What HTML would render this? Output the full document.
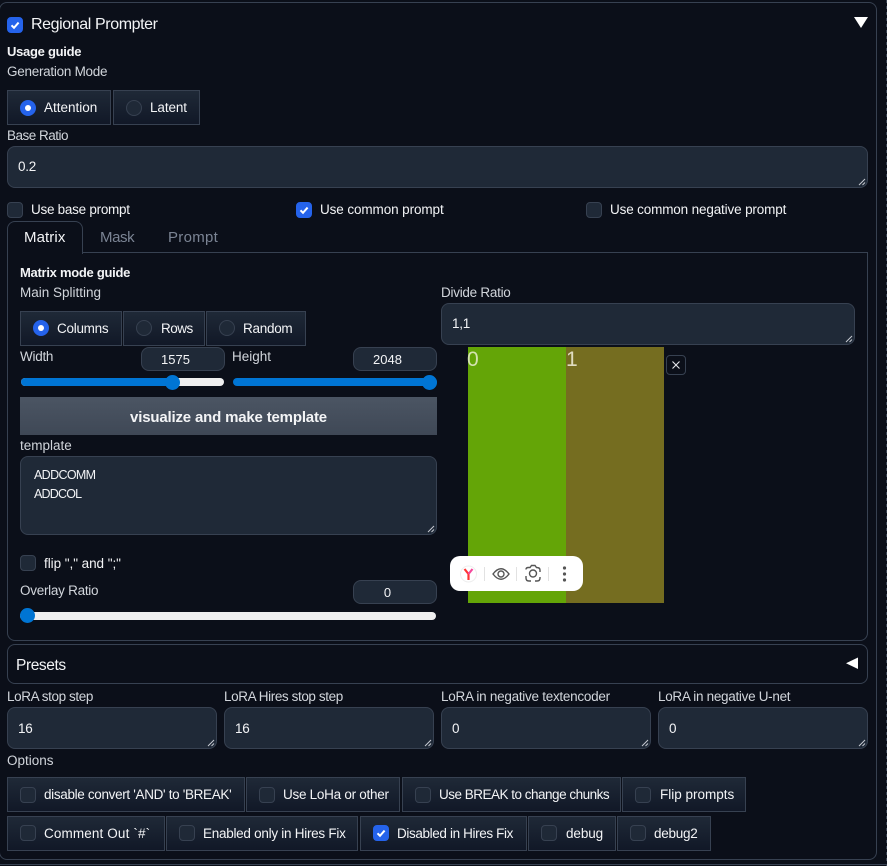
<!DOCTYPE html>
<html><head><meta charset="utf-8"><style>
html,body{margin:0;padding:0;background:#0b0f19}
body{width:887px;height:866px;position:relative;overflow:hidden;font-family:"Liberation Sans",sans-serif;font-size:13.5px;color:#f3f4f6}
.a,.t,.b,.i,.cb,.r,.g,.n{position:absolute;box-sizing:border-box}
.t{white-space:nowrap;line-height:22px;height:22px;letter-spacing:-.27px}
.l{color:#d1d5db}
.s{font-weight:700;color:#f3f4f6;font-size:13px;letter-spacing:-.28px}
.b{border:1px solid #374151}
.i{background:#1f2937;border:1px solid #374151;border-radius:8px}
.i svg{position:absolute;right:1px;bottom:1px}
.g{border:1px solid #374151;background:linear-gradient(to bottom,#1f2937,#111827)}
.cb{width:16px;height:16px;border-radius:4px;background:#1f2937;border:1px solid #374151}
.cb.on{background:#2563eb;border-color:#2563eb}
.cb svg{position:absolute;left:-1px;top:-1px}
.r{width:16px;height:16px;border-radius:50%;background:#1f2937;border:1px solid #374151}
.r.on{background:#2563eb;border-color:#2563eb}
.r.on:after{content:"";position:absolute;left:4px;top:4px;width:6px;height:6px;border-radius:50%;background:#fff}
.n{background:#1f2937;border:1px solid #374151;border-radius:8px;height:24px;width:84px;text-align:center;line-height:24px;font-size:13px;padding-right:15px}
.tr{position:absolute;background:#efefef;border-radius:4px;height:8px}
.fi{position:absolute;background:#0075d4;border-radius:4px;height:8px}
.th{position:absolute;background:#0075d4;border-radius:50%;width:15px;height:15px}
</style></head><body>

<svg width="0" height="0" style="position:absolute"><defs>
<symbol id="ck" viewBox="0 0 16 16"><path d="M4.5 8.3 L7 10.8 L11.6 5.6" fill="none" stroke="#fff" stroke-width="2"/></symbol>
<symbol id="rz" viewBox="0 0 8 8"><path d="M1 7 L7 1 M4.5 7 L7 4.5" stroke="#c5c9d0" stroke-width="1" fill="none"/></symbol>
</defs></svg>

<!-- outer panel -->
<div class="b" style="left:-1px;top:2px;width:878px;height:858px;border-radius:8px"></div>
<div class="a" style="left:0;top:864px;width:887px;height:1px;background:#374151"></div>
<div class="a" style="left:886px;top:0;width:1px;height:866px;background:repeating-linear-gradient(to bottom,#374151 0 3px,transparent 3px 6px)"></div>

<div class="cb on" style="left:7px;top:17px"><svg width="16" height="16"><use href="#ck"/></svg></div>
<div class="t" style="left:31px;top:14px;font-size:16px;letter-spacing:-.4px">Regional Prompter</div>
<svg class="a" style="left:854px;top:16px" width="14" height="13"><path d="M0 1 H14 L7 12 Z" fill="#fff"/></svg>

<div class="t s" style="left:7px;top:41px">Usage guide</div>
<div class="t l" style="left:7px;top:61px">Generation Mode</div>

<div class="g" style="left:7px;top:90px;width:104px;height:35px"></div>
<div class="g" style="left:113px;top:90px;width:87px;height:35px"></div>
<div class="r on" style="left:20px;top:100px"></div>
<div class="t" style="left:44px;top:97px;letter-spacing:0">Attention</div>
<div class="r" style="left:126px;top:100px"></div>
<div class="t" style="left:150px;top:97px;letter-spacing:-.1px">Latent</div>

<div class="t l" style="left:7px;top:125px;letter-spacing:-.5px">Base Ratio</div>
<div class="i" style="left:7px;top:146px;width:861px;height:42px"><svg width="8" height="8"><use href="#rz"/></svg></div>
<div class="t" style="left:18px;top:156px">0.2</div>

<div class="cb" style="left:7px;top:202px"></div>
<div class="t" style="left:31px;top:199px">Use base prompt</div>
<div class="cb on" style="left:296px;top:202px"><svg width="16" height="16"><use href="#ck"/></svg></div>
<div class="t" style="left:320px;top:199px;letter-spacing:-.1px">Use common prompt</div>
<div class="cb" style="left:586px;top:202px"></div>
<div class="t" style="left:610px;top:199px;letter-spacing:-.15px">Use common negative prompt</div>

<!-- tabs -->
<div class="b" style="left:7px;top:252px;width:861px;height:389px;border-radius:0 0 8px 8px"></div>
<div class="a" style="left:7px;top:221px;width:76px;height:33px;background:#0b0f19;border:1px solid #374151;border-bottom:none;border-radius:8px 8px 0 0"></div>
<div class="t" style="left:24px;top:227px;font-size:15px;letter-spacing:.1px">Matrix</div>
<div class="t" style="left:100px;top:227px;font-size:15px;letter-spacing:-.4px;color:#7b8494">Mask</div>
<div class="t" style="left:168px;top:227px;font-size:15px;letter-spacing:.3px;color:#7b8494">Prompt</div>

<div class="t s" style="left:20px;top:262px">Matrix mode guide</div>
<div class="t l" style="left:20px;top:282px;letter-spacing:0">Main Splitting</div>

<div class="g" style="left:20px;top:311px;width:102px;height:35px"></div>
<div class="g" style="left:123px;top:311px;width:82px;height:35px"></div>
<div class="g" style="left:206px;top:311px;width:100px;height:35px"></div>
<div class="r on" style="left:33px;top:320px"></div>
<div class="t" style="left:57px;top:318px">Columns</div>
<div class="r" style="left:136px;top:320px"></div>
<div class="t" style="left:161px;top:318px;letter-spacing:-.5px">Rows</div>
<div class="r" style="left:219px;top:320px"></div>
<div class="t" style="left:243px;top:318px">Random</div>

<div class="t l" style="left:20px;top:346px">Width</div>
<div class="n" style="left:141px;top:347px">1575</div>
<div class="t l" style="left:232px;top:346px;letter-spacing:0">Height</div>
<div class="n" style="left:353px;top:347px">2048</div>

<div class="tr" style="left:21px;top:378px;width:203px"></div>
<div class="fi" style="left:21px;top:378px;width:150px"></div>
<div class="th" style="left:165px;top:375px"></div>
<div class="fi" style="left:233px;top:378px;width:204px"></div>
<div class="th" style="left:422px;top:375px"></div>

<div class="a" style="left:20px;top:397px;width:417px;height:38px;background:linear-gradient(to bottom,#4b5563,#3f4856);text-align:center;line-height:41px;font-weight:700;font-size:15px;letter-spacing:-.18px;color:#f3f4f6">visualize and make template</div>

<div class="t l" style="left:20px;top:435px;letter-spacing:0">template</div>
<div class="i" style="left:20px;top:456px;width:417px;height:79px"><svg width="8" height="8"><use href="#rz"/></svg></div>
<div class="t" style="left:34px;top:464px;font-size:12.5px;letter-spacing:-.65px">ADDCOMM</div>
<div class="t" style="left:34px;top:483px;font-size:12.5px;letter-spacing:-.8px">ADDCOL</div>

<div class="cb" style="left:20px;top:555px"></div>
<div class="t" style="left:44px;top:553px;letter-spacing:-.05px">flip "," and ";"</div>
<div class="t l" style="left:20px;top:580px">Overlay Ratio</div>
<div class="n" style="left:353px;top:580px">0</div>
<div class="tr" style="left:20px;top:612px;width:416px"></div>
<div class="th" style="left:20px;top:608px"></div>

<!-- Divide ratio + image -->
<div class="t l" style="left:441px;top:282px">Divide Ratio</div>
<div class="i" style="left:441px;top:303px;width:414px;height:42px"><svg width="8" height="8"><use href="#rz"/></svg></div>
<div class="t" style="left:452px;top:313px">1,1</div>

<div class="a" style="left:468px;top:347px;width:98px;height:256px;background:#64a507"></div>
<div class="a" style="left:566px;top:347px;width:98px;height:256px;background:#756d20"></div>
<div class="t" style="left:467px;top:349px;font-size:21px;letter-spacing:0;color:#d4e3b0">0</div>
<div class="t" style="left:566px;top:349px;font-size:21px;letter-spacing:0;color:#e0dcc0">1</div>
<div class="a" style="left:666px;top:355px;width:20px;height:20px;border:1px solid #374151;border-radius:4px"></div>
<svg class="a" style="left:666px;top:355px" width="20" height="20"><path d="M6.5 6.5 L13.5 13.5 M13.5 6.5 L6.5 13.5" stroke="#e5e7eb" stroke-width="1.1"/></svg>

<!-- floating toolbar -->
<div class="a" style="left:450px;top:556px;width:133px;height:35px;background:#fff;border-radius:10px"></div>
<svg class="a" style="left:450px;top:556px" width="133" height="35">
<circle cx="18.500" cy="18" r="8" fill="#fff" stroke="#eee"/>
<path d="M18.500 24 V18 L14.500 13" fill="none" stroke="#f33" stroke-width="2.200"/>
<path d="M18.500 18 L22.500 13" fill="none" stroke="#f4489c" stroke-width="2.200"/>
<path d="M34.500 11 V25 M66.500 11 V25 M98.500 11 V25" stroke="#e2e2e2" stroke-width="1"/>
<path d="M43 18 Q51 7.500 59 18 Q51 28.500 43 18 Z" fill="none" stroke="#555" stroke-width="1.400"/>
<circle cx="51" cy="18" r="3" fill="none" stroke="#555" stroke-width="1.400"/>
<path d="M76 13.500 Q76 11.500 78.500 11.500 L80 11.500 L81.500 9.500 L85 9.500 L86.500 11.500 Q90 11.500 90 14 L90 16 M90 21 L90 22 Q90 25 87 25 L85 25 M81 25 L79 25 Q76 25 76 22 L76 20" fill="none" stroke="#555" stroke-width="1.400"/>
<circle cx="83" cy="17.500" r="3.500" fill="none" stroke="#555" stroke-width="1.400"/>
<circle cx="114.500" cy="12" r="1.600" fill="#555"/><circle cx="114.500" cy="18" r="1.600" fill="#555"/><circle cx="114.500" cy="24" r="1.600" fill="#555"/>
</svg>

<!-- Presets -->
<div class="b" style="left:7px;top:644px;width:861px;height:40px;border-radius:8px"></div>
<div class="t" style="left:16px;top:655px;font-size:15.5px;letter-spacing:-.4px">Presets</div>
<svg class="a" style="left:845px;top:657px" width="14" height="13"><path d="M13 .5 V12 L1 6.300 Z" fill="#fff"/></svg>

<!-- LoRA -->
<div class="t l" style="left:7px;top:686px;letter-spacing:-.4px">LoRA stop step</div>
<div class="t l" style="left:224px;top:686px;letter-spacing:-.4px">LoRA Hires stop step</div>
<div class="t l" style="left:441px;top:686px">LoRA in negative textencoder</div>
<div class="t l" style="left:658px;top:686px;letter-spacing:-.3px">LoRA in negative U-net</div>
<div class="i" style="left:7px;top:707px;width:210px;height:42px"><svg width="8" height="8"><use href="#rz"/></svg></div>
<div class="i" style="left:224px;top:707px;width:210px;height:42px"><svg width="8" height="8"><use href="#rz"/></svg></div>
<div class="i" style="left:441px;top:707px;width:210px;height:42px"><svg width="8" height="8"><use href="#rz"/></svg></div>
<div class="i" style="left:658px;top:707px;width:210px;height:42px"><svg width="8" height="8"><use href="#rz"/></svg></div>
<div class="t" style="left:18px;top:718px">16</div>
<div class="t" style="left:235px;top:718px">16</div>
<div class="t" style="left:452px;top:718px">0</div>
<div class="t" style="left:669px;top:718px">0</div>

<div class="t l" style="left:7px;top:750px;letter-spacing:0">Options</div>

<div class="g" style="left:7px;top:777px;width:238px;height:35px"></div>
<div class="g" style="left:246px;top:777px;width:154px;height:35px"></div>
<div class="g" style="left:402px;top:777px;width:219px;height:35px"></div>
<div class="g" style="left:622px;top:777px;width:124px;height:35px"></div>
<div class="cb" style="left:20px;top:787px"></div>
<div class="t" style="left:44px;top:784px;letter-spacing:-.33px">disable convert 'AND' to 'BREAK'</div>
<div class="cb" style="left:259px;top:787px"></div>
<div class="t" style="left:283px;top:784px">Use LoHa or other</div>
<div class="cb" style="left:415px;top:787px"></div>
<div class="t" style="left:439px;top:784px;letter-spacing:-.5px">Use BREAK to change chunks</div>
<div class="cb" style="left:635px;top:787px"></div>
<div class="t" style="left:660px;top:784px;letter-spacing:0">Flip prompts</div>

<div class="g" style="left:7px;top:816px;width:158px;height:35px"></div>
<div class="g" style="left:166px;top:816px;width:192px;height:35px"></div>
<div class="g" style="left:360px;top:816px;width:167px;height:35px"></div>
<div class="g" style="left:528px;top:816px;width:88px;height:35px"></div>
<div class="g" style="left:617px;top:816px;width:94px;height:35px"></div>
<div class="cb" style="left:20px;top:825px"></div>
<div class="t" style="left:44px;top:823px;letter-spacing:.13px">Comment Out `#`</div>
<div class="cb" style="left:179px;top:825px"></div>
<div class="t" style="left:203px;top:823px">Enabled only in Hires Fix</div>
<div class="cb on" style="left:373px;top:825px"><svg width="16" height="16"><use href="#ck"/></svg></div>
<div class="t" style="left:397px;top:823px;letter-spacing:-.37px">Disabled in Hires Fix</div>
<div class="cb" style="left:541px;top:825px"></div>
<div class="t" style="left:566px;top:823px;letter-spacing:-.1px">debug</div>
<div class="cb" style="left:630px;top:825px"></div>
<div class="t" style="left:654px;top:823px">debug2</div>

</body></html>
